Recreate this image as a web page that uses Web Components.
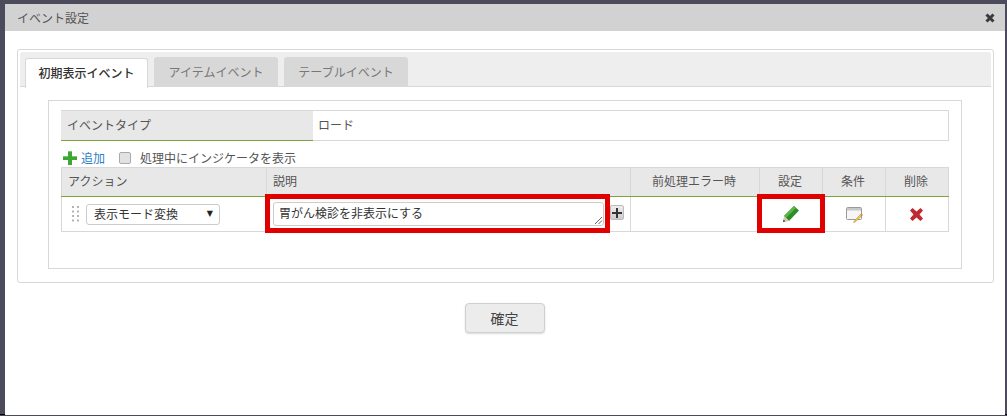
<!DOCTYPE html>
<html lang="ja">
<head>
<meta charset="utf-8">
<title>イベント設定</title>
<style>
  html, body { margin: 0; height: 100%; }
  body {
    background: #4b4b5c;
    font: 12px/16px "Noto Sans CJK JP", "Liberation Sans", sans-serif;
    color: #555;
    overflow: hidden;
  }
</style>
</head>
<body>
<event-dialog>
  <span slot="title">イベント設定</span>
  <tab-panel>
    <tab-item active>初期表示イベント</tab-item>
    <tab-item>アイテムイベント</tab-item>
    <tab-item>テーブルイベント</tab-item>
    <event-form></event-form>
  </tab-panel>
  <confirm-button slot="footer">確定</confirm-button>
</event-dialog>

<script>
class EventDialog extends HTMLElement {
  connectedCallback() {
    this.attachShadow({mode: 'open'}).innerHTML = `
    <style>
      :host { display: block; height: 415px; box-sizing: border-box; border-bottom: 1px solid #000; padding: 4px 2px 0 5px; }
      .win { background: #fff; height: 411px; display: flex; flex-direction: column; }
      .head { height: 27px; background: #d2d2d2; display: flex; align-items: center; justify-content: space-between; padding: 0 10px 0 12px; color: #555; flex: none; }
      .body { padding: 18px 11px 0 12px; }
      .foot { display: flex; justify-content: center; padding-top: 20px; margin-left: -1px; }
      svg { display: block; }
    </style>
    <div class="win">
      <div class="head">
        <slot name="title"></slot>
        <svg width="10" height="10" viewBox="0 0 10 10"><path d="M1.500 1.500 8.500 8.500M8.500 1.500 1.500 8.500" stroke="#3a3a3a" stroke-width="3"/></svg>
      </div>
      <div class="body"><slot></slot></div>
      <div class="foot"><slot name="footer"></slot></div>
    </div>`;
  }
}

class TabPanel extends HTMLElement {
  connectedCallback() {
    this.attachShadow({mode: 'open'}).innerHTML = `
    <style>
      :host { display: block; height: 234px; box-sizing: border-box; border: 1px solid #d8d8d8; border-radius: 3px; padding: 2px; }
      .bar { height: 35px; box-sizing: border-box; background: #eee; border-radius: 3px 3px 0 0; padding: 5px 0 0 5px; display: flex; gap: 6px; border-bottom: 1px solid #d8d8d8; }
      .content { padding: 13px 28px 0 28px; }
    </style>
    <div class="bar"><slot name="tabs"></slot></div>
    <div class="content"><slot></slot></div>`;
    this.querySelectorAll('tab-item').forEach(t => t.slot = 'tabs');
  }
}

class TabItem extends HTMLElement {
  connectedCallback() {
    this.attachShadow({mode: 'open'}).innerHTML = `
    <style>
      :host { display: block; box-sizing: border-box; width: 124px; height: 29px; background: #d8d8d8; color: #777; border-radius: 3px 3px 0 0; text-align: center; line-height: 29px; }
      :host([active]) { width: 123px; height: 30px; margin-top: 1px; background: #fff; color: #333; font-weight: 500; border: 1px solid #d8d8d8; border-bottom: 0; line-height: 27px; }
    </style>
    <slot></slot>`;
  }
}

class EventForm extends HTMLElement {
  connectedCallback() {
    this.attachShadow({mode: 'open'}).innerHTML = `
    <style>
      :host { display: block; width: 914px; height: 169px; box-sizing: border-box; border: 1px solid #d8d8d8; padding: 9px 12px 0 12px; }
      .type { display: grid; grid-template-columns: 252px 1fr; height: 31px; box-sizing: border-box; border: 1px solid #d8d8d8; border-left: 0; }
      .type div { padding-left: 5px; line-height: 28px; }
      .type .lb { background: #e8e8e8; border-bottom: 1px solid #7fa33f; height: 30px; box-sizing: border-box; padding-left: 6px; }
      .tools { display: flex; align-items: center; height: 26px; box-sizing: border-box; padding: 7px 0 0 2px; }
      .add { color: #2a7fc9; margin-left: 4px; }
      .chk { width: 12px; height: 12px; box-sizing: border-box; background: #e2e2e2; border: 1px solid #aaa; border-radius: 2px; margin: 0 9px 0 14px; }
      .tools svg { display: block; }
    </style>
    <div class="type"><div class="lb">イベントタイプ</div><div>ロード</div></div>
    <div class="tools">
      <svg width="14" height="14" viewBox="0 0 14 14"><path d="M5 0h4v5h5v4H9v5H5V9H0V5h5z" fill="#3fa535"/><path d="M5 0h4v1H5zM0 5h5v1H0zM9 5h5v1H9z" fill="#6fcf5f"/></svg>
      <span class="add">追加</span>
      <span class="chk"></span>
      <span>処理中にインジケータを表示</span>
    </div>
    <action-table></action-table>`;
  }
}

class ActionTable extends HTMLElement {
  connectedCallback() {
    this.attachShadow({mode: 'open'}).innerHTML = `
    <style>
      :host { display: block; position: relative; width: 888px; }
      .row { display: grid; grid-template-columns: 206px 364px 129px 63px 63px 63px; box-sizing: border-box; }
      .hd { height: 30px; background: #e8e8e8; border-top: 1px solid #d8d8d8; border-bottom: 1px solid #7fa33f; }
      .hd div { text-align: center; line-height: 26px; padding-right: 2px; border-right: 1px solid #d8d8d8; box-sizing: border-box; }
      .hd div.l { text-align: left; padding-left: 6px; padding-right: 0; }
      .hd div:first-child { border-left: 1px solid #d8d8d8; }
      .bd { height: 35px; border-bottom: 1px solid #d8d8d8; }
      .bd > div { border-right: 1px solid #d8d8d8; box-sizing: border-box; display: flex; align-items: center; justify-content: center; }
      .bd > div:first-child { border-left: 1px solid #d8d8d8; justify-content: flex-start; padding-left: 10px; gap: 7px; }
      .bd > div.desc { justify-content: flex-start; padding-left: 6px; gap: 6px; }
      .sel { width: 134px; height: 21px; box-sizing: border-box; border: 1px solid #ccc; border-radius: 3px; display: flex; justify-content: space-between; align-items: center; padding: 0 6px 1px 7px; color: #333; }
      .arr { font-size: 8px; color: #222; font-family: "DejaVu Sans", sans-serif; }
      .ta { position: relative; width: 331px; height: 24px; box-sizing: border-box; border: 1px solid #ccc; border-radius: 3px; padding: 0 0 0 5px; line-height: 20px; color: #333; }
      .ta svg { position: absolute; right: 0; bottom: 0; }
      .plus { width: 14px; height: 15px; margin: -3px 0 0 0; background: linear-gradient(#eee, #ccc); border: 1px solid #bbb; border-radius: 2px; box-sizing: border-box; display: flex; align-items: center; justify-content: center; }
      .mark { position: absolute; top: 27px; height: 39px; box-sizing: border-box; border: 5px solid #e00000; }
      svg { display: block; flex: none; }
      .note { margin-top: 1px; }
      .del { margin-right: 2px; }
    </style>
    <div class="row hd">
      <div class="l">アクション</div><div class="l">説明</div><div>前処理エラー時</div><div>設定</div><div>条件</div><div>削除</div>
    </div>
    <div class="row bd">
      <div>
        <svg width="7" height="16" viewBox="0 0 7 16" fill="#b4b4b4"><path d="M0 0h2v2H0zM5 0h2v2H5zM0 4.500h2v2H0zM5 4.500h2v2H5zM0 9h2v2H0zM5 9h2v2H5zM0 13.500h2v2H0zM5 13.500h2v2H5z"/></svg>
        <div class="sel"><span>表示モード変換</span><span class="arr">▼</span></div>
      </div>
      <div class="desc">
        <div class="ta">胃がん検診を非表示にする
          <svg width="9" height="9" viewBox="0 0 9 9"><path d="M1 8 8 1M4.500 8 8 4.500" stroke="#666" stroke-width="1" fill="none"/></svg>
        </div>
        <div class="plus"><svg width="10" height="10" viewBox="0 0 10 10"><path d="M4 0h2v4h4v2H6v4H4V6H0V4h4z" fill="#333"/></svg></div>
      </div>
      <div></div>
      <div>
        <svg width="16" height="16" viewBox="0 0 16 16"><path d="M11 0 16 4.500 6 15 1 10z" fill="#2f8a2a"/><path d="M11 0 13 2 3 12 1 10z" fill="#58b548"/><path d="M1 10 6 15 0 16z" fill="#d8c8a8"/><path d="M0.500 13.500 0 16 2.500 15.500z" fill="#444"/></svg>
      </div>
      <div>
        <svg class="note" width="17" height="16" viewBox="0 0 17 16"><rect x="0.500" y="0.500" width="15" height="12" rx="1" fill="#f6f6f6" stroke="#999"/><rect x="1" y="1" width="14" height="2.500" fill="#c8c8c8"/><path d="M15.500 6.500 9 13 7.500 15.500 10 14.500 16.500 8z" fill="#f2c94c" stroke="#a88a2a" stroke-width="0.500"/><path d="M15 7 16.500 8.500 15.800 9 14.300 7.700z" fill="#e05a6a"/></svg>
      </div>
      <div>
        <svg class="del" width="13" height="13" viewBox="0 0 13 13"><path d="M2.500 0 6.500 3.500 10.500 0 13 2.500 9.500 6.500 13 10.500 10.500 13 6.500 9.500 2.500 13 0 10.500 3.500 6.500 0 2.500z" fill="#bf2a30"/></svg>
      </div>
    </div>
    <div class="mark" style="left:204px;width:345px"></div>
    <div class="mark" style="left:696px;width:68px"></div>`;
  }
}

class ConfirmButton extends HTMLElement {
  connectedCallback() {
    this.attachShadow({mode: 'open'}).innerHTML = `
    <style>
      :host { display: block; width: 80px; height: 30px; box-sizing: border-box; background: #ececec; border: 1px solid #d0d0d0; border-radius: 4px; box-shadow: 0 1px 2px rgba(0,0,0,.15); text-align: center; line-height: 28px; font-size: 14px; color: #444; }
    </style>
    <slot></slot>`;
  }
}

customElements.define('event-dialog', EventDialog);
customElements.define('tab-panel', TabPanel);
customElements.define('tab-item', TabItem);
customElements.define('event-form', EventForm);
customElements.define('action-table', ActionTable);
customElements.define('confirm-button', ConfirmButton);
</script>
</body>
</html>
